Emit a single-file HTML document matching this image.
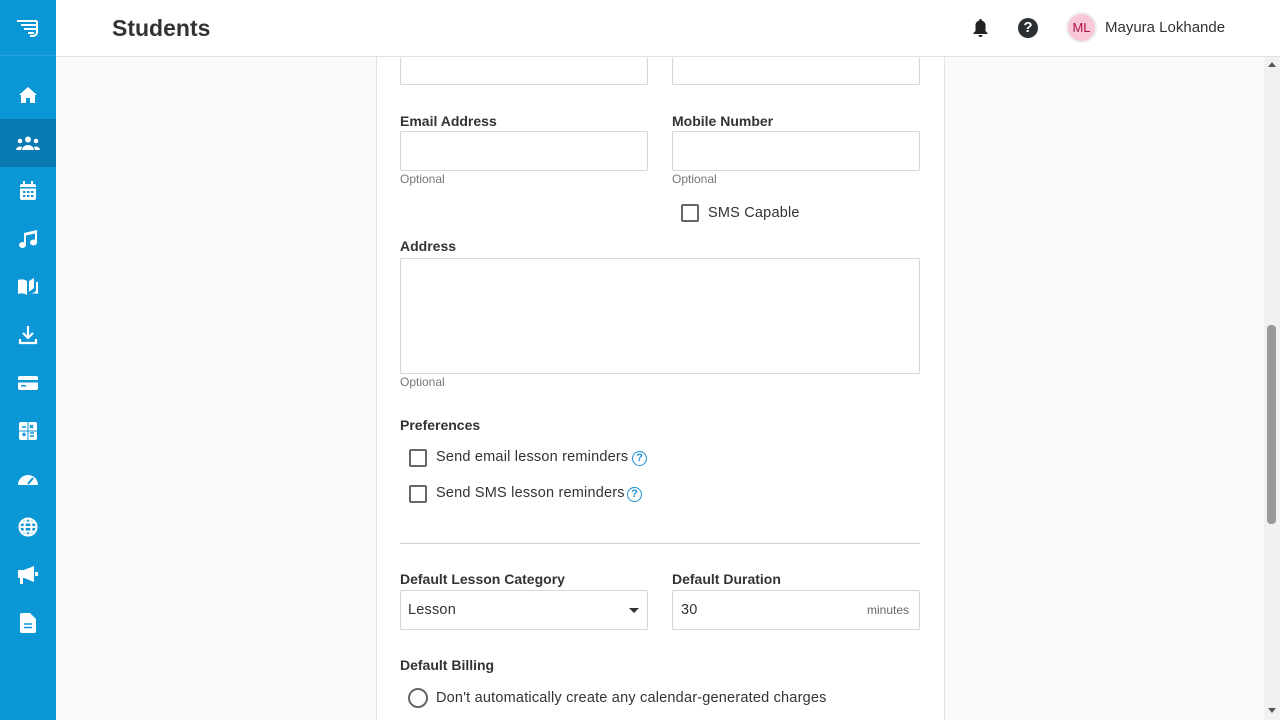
<!DOCTYPE html>
<html><head><meta charset="utf-8"><style>
*{box-sizing:border-box;margin:0;padding:0}
html,body{width:1280px;height:720px;overflow:hidden}
body{font-family:"Liberation Sans",sans-serif;background:#fafafa;position:relative;color:#333}
.side{position:absolute;left:0;top:0;width:56px;height:720px;background:#0b96d6}
.side .logo{height:56px;border-bottom:1px solid #2aa3dc}
.side .it{position:absolute;left:0;width:56px;height:48px;display:flex;align-items:center;justify-content:center}
.side .act{background:#0a7bb2}
.hdr{position:absolute;left:56px;top:0;right:0;height:57px;background:#fff;border-bottom:1px solid #dde2e6}
.hdr h1{position:absolute;left:56px;top:15px;font-size:23px;font-weight:bold;color:#333}
.card{position:absolute;left:376px;top:57px;width:569px;height:663px;background:#fff;border-left:1px solid #e2e2e2;border-right:1px solid #e2e2e2}
.inp{position:absolute;border:1px solid #d8d8d8;border-radius:2px;background:#fff}
.lbl{position:absolute;font-size:14px;font-weight:bold;color:#333}
.opt{position:absolute;font-size:12px;color:#777}
.cb{position:absolute;width:18px;height:18px;border:2px solid #666;border-radius:2px}
.txt{position:absolute;font-size:14.5px;color:#333;letter-spacing:0.2px}
.q{position:absolute;width:15px;height:15px;border:1.5px solid #1a8ed0;border-radius:50%;color:#1a8ed0;font-size:11px;font-weight:bold;text-align:center;line-height:12px}
.sb{position:absolute;right:0;top:57px;width:16px;height:663px;background:#f1f1f1}
</style></head><body>
<div class="side">
<div class="logo"><svg style="position:absolute;left:16px;top:19px" width="24" height="18" viewBox="0 0 24 18"><g stroke="#fff" stroke-width="2" fill="none"><path d="M1 2h20M5 6h15M8 10h12M12 14h6"/><path d="M21 2v11a4 4 0 0 1-4 4h-3"/></g></svg></div>
<div class="it" style="top:71px"><svg width="20" height="18" viewBox="0 0 20 18"><path d="M10 1L1 9h2v8h5v-5h4v5h5V9h2z" fill="#fff"/></svg></div>
<div class="it act" style="top:119px"><svg width="24" height="14" viewBox="0 0 24 14"><g fill="#fff"><circle cx="12" cy="3.5" r="3"/><circle cx="4" cy="5" r="2.3"/><circle cx="20" cy="5" r="2.3"/><path d="M6 14a6 5 0 0 1 12 0zM0 14a4 4 0 0 1 6-3l-1 3zM24 14a4 4 0 0 0-6-3l1 3z"/></g></svg></div>
<div class="it" style="top:167px"><svg width="18" height="20" viewBox="0 0 18 20"><rect x="1" y="3" width="16" height="16" rx="2" fill="#fff"/><rect x="4" y="0" width="2" height="4" fill="#fff"/><rect x="12" y="0" width="2" height="4" fill="#fff"/><g fill="#0b96d6"><rect x="1" y="6" width="16" height="1.5"/><rect x="4" y="10" width="2.5" height="2"/><rect x="8" y="10" width="2.5" height="2"/><rect x="12" y="10" width="2.5" height="2"/><rect x="4" y="14" width="2.5" height="2"/><rect x="8" y="14" width="2.5" height="2"/><rect x="12" y="14" width="2.5" height="2"/></g></svg></div>
<div class="it" style="top:215px"><svg width="20" height="20" viewBox="0 0 20 20"><g fill="#fff"><ellipse cx="4.5" cy="16" rx="3.5" ry="3"/><ellipse cx="15.5" cy="13.5" rx="3.5" ry="3"/><path d="M6 16V4l13-3v12h-2V4.5L8 6.5V16z"/></g></svg></div>
<div class="it" style="top:263px"><svg width="22" height="18" viewBox="0 0 22 18"><g fill="#fff"><path d="M1 2c3-1 6-1 9 1v14c-3-2-6-2-9-1z"/><path d="M12 3l5-3v10l-5 4zM19 4h2v12c-3-1-6-1-8 1l6-4z"/></g></svg></div>
<div class="it" style="top:311px"><svg width="20" height="20" viewBox="0 0 20 20"><g stroke="#fff" stroke-width="2.2" fill="none"><path d="M10 1v11M5 8l5 5 5-5M2 14v4h16v-4"/></g></svg></div>
<div class="it" style="top:359px"><svg width="22" height="16" viewBox="0 0 22 16"><rect x="1" y="1" width="20" height="14" rx="2" fill="#fff"/><rect x="1" y="5" width="20" height="2.5" fill="#0b96d6"/><rect x="4" y="10" width="5" height="1.5" fill="#0b96d6"/></svg></div>
<div class="it" style="top:407px"><svg width="18" height="18" viewBox="0 0 18 18"><rect width="18" height="18" rx="2" fill="#fff"/><g stroke="#0b96d6" stroke-width="1.5"><path d="M3 5h4M11 3l3 3M14 3l-3 3M3 12.5h4M5 10.5v4M11 11h4M11 14h4"/></g><path d="M9 0v18M0 9h18" stroke="#0b96d6" stroke-width="1"/></svg></div>
<div class="it" style="top:455px"><svg width="20" height="14" viewBox="0 0 20 14"><path d="M0 13a10 10 0 0 1 20 0z" fill="#fff"/><path d="M10 12l5-6" stroke="#0b96d6" stroke-width="2"/></svg></div>
<div class="it" style="top:503px"><svg width="20" height="20" viewBox="0 0 20 20"><g stroke="#fff" stroke-width="2" fill="none"><circle cx="10" cy="10" r="8.5"/><ellipse cx="10" cy="10" rx="3.5" ry="8.5"/><path d="M1.5 10h17M3 5.5h14M3 14.5h14"/></g></svg></div>
<div class="it" style="top:551px"><svg width="22" height="20" viewBox="0 0 22 20"><g fill="#fff"><path d="M7 5l10-4v16L7 13z"/><rect x="1" y="5" width="6" height="8" rx="1"/><rect x="3" y="12" width="3" height="7"/><rect x="18" y="7" width="3" height="4"/></g></svg></div>
<div class="it" style="top:599px"><svg width="16" height="20" viewBox="0 0 16 20"><path d="M0 2a2 2 0 0 1 2-2h8l6 6v12a2 2 0 0 1-2 2H2a2 2 0 0 1-2-2z" fill="#fff"/><path d="M4 11h8M4 14.5h8" stroke="#0b96d6" stroke-width="1.6"/></svg></div>
</div>
<div class="hdr"><h1>Students</h1>
<svg style="position:absolute;left:917px;top:19px" width="15" height="18" viewBox="0 0 15 18"><path d="M7.5 0a1.3 1.3 0 0 1 1.3 1.5A5 5 0 0 1 12.5 7v5l2 2v1H.5v-1l2-2V7a5 5 0 0 1 3.7-5.5A1.3 1.3 0 0 1 7.5 0zM5.5 16h4a2 2 0 0 1-4 0z" fill="#222"/></svg>
<div style="position:absolute;left:962px;top:18px;width:20px;height:20px;border-radius:50%;background:#2b2f33;color:#fff;font-weight:bold;font-size:15px;text-align:center;line-height:20px">?</div>
<div style="position:absolute;left:1010px;top:12px;width:31px;height:31px;border-radius:50%;background:#f8c8da;border:2px solid #eee;color:#b0103c;font-size:13px;text-align:center;line-height:27px">ML</div>
<div style="position:absolute;left:1049px;top:19px;font-size:15px;color:#333">Mayura Lokhande</div>
</div>
<div class="card"></div>
<div class="inp" style="left:400px;top:57px;width:248px;height:28px;border-top:none"></div>
<div class="inp" style="left:672px;top:57px;width:248px;height:28px;border-top:none"></div>
<div class="lbl" style="left:400px;top:113px">Email Address</div>
<div class="lbl" style="left:672px;top:113px">Mobile Number</div>
<div class="inp" style="left:400px;top:131px;width:248px;height:40px"></div>
<div class="inp" style="left:672px;top:131px;width:248px;height:40px"></div>
<div class="opt" style="left:400px;top:172px">Optional</div>
<div class="opt" style="left:672px;top:172px">Optional</div>
<div class="cb" style="left:681px;top:204px"></div>
<div class="txt" style="left:708px;top:205px">SMS Capable</div>
<div class="lbl" style="left:400px;top:238px">Address</div>
<div class="inp" style="left:400px;top:258px;width:520px;height:116px"></div>
<div class="opt" style="left:400px;top:375px">Optional</div>
<div class="lbl" style="left:400px;top:417px">Preferences</div>
<div class="cb" style="left:409px;top:449px"></div>
<div class="txt" style="left:436px;top:449px">Send email lesson reminders</div>
<div class="q" style="left:632px;top:451px">?</div>
<div class="cb" style="left:409px;top:485px"></div>
<div class="txt" style="left:436px;top:485px">Send SMS lesson reminders</div>
<div class="q" style="left:627px;top:487px">?</div>
<div style="position:absolute;left:400px;top:543px;width:520px;height:1px;background:#d0d0d0"></div>
<div class="lbl" style="left:400px;top:571px">Default Lesson Category</div>
<div class="lbl" style="left:672px;top:571px">Default Duration</div>
<div class="inp" style="left:400px;top:590px;width:248px;height:40px"></div>
<div class="txt" style="left:408px;top:602px">Lesson</div>
<div style="position:absolute;left:629px;top:608px;border:5px solid transparent;border-top:5px solid #333;border-bottom:none"></div>
<div class="inp" style="left:672px;top:590px;width:248px;height:40px"></div>
<div class="txt" style="left:681px;top:602px">30</div>
<div style="position:absolute;left:867px;top:603px;font-size:12px;color:#666">minutes</div>
<div class="lbl" style="left:400px;top:657px">Default Billing</div>
<div style="position:absolute;left:408px;top:688px;width:20px;height:20px;border:2px solid #666;border-radius:50%"></div>
<div class="txt" style="left:436px;top:690px">Don't automatically create any calendar-generated charges</div>
<div class="sb"><div style="position:absolute;left:4px;top:5px;border:4px solid transparent;border-bottom:5px solid #555;border-top:none"></div>
<div style="position:absolute;left:3px;top:268px;width:9px;height:199px;background:#999;border-radius:4px"></div>
<div style="position:absolute;left:4px;top:651px;border:4px solid transparent;border-top:5px solid #555;border-bottom:none"></div></div>
</body></html>
